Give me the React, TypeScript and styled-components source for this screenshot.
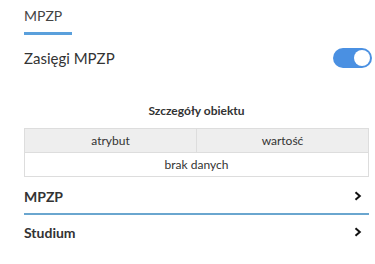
import React from "react";
import styled, { createGlobalStyle } from "styled-components";

const GlobalStyle = createGlobalStyle`
    body {
        margin: 0;
        background: #fff;
        font-family: Lato, "Open Sans", sans-serif;
        color: #333;
    }
`;

const Panel = styled.div`
    width: 375px;
    height: 264px;
    padding: 0 3px 0 24px;
    box-sizing: border-box;
    display: flex;
    flex-direction: column;
`;

const Tabs = styled.div`
    display: flex;
    padding-top: 7px;
`;

const Tab = styled.div<{ $active?: boolean }>`
    font-size: 14px;
    line-height: 18px;
    padding: 0 0 7px;
    width: 48px;
    color: #444;
    border-bottom: 3px solid ${(p) => (p.$active ? "#5aa0dc" : "transparent")};
`;

const LayerRow = styled.div`
    display: flex;
    align-items: center;
    justify-content: space-between;
    margin-top: 13px;
    height: 20px;
`;

const LayerLabel = styled.span`
    font-size: 15px;
    color: #333;
`;

const Switch = styled.div<{ $on?: boolean }>`
    width: 39px;
    height: 20px;
    border-radius: 10px;
    background: ${(p) => (p.$on ? "#4a90e2" : "#ccc")};
    display: flex;
    align-items: center;
    justify-content: ${(p) => (p.$on ? "flex-end" : "flex-start")};
    padding: 0 2px;
    box-sizing: border-box;
`;

const Knob = styled.div`
    width: 16px;
    height: 16px;
    border-radius: 50%;
    background: #fff;
`;

const Details = styled.div`
    margin-top: 35px;
    display: flex;
    flex-direction: column;
    width: 345px;
`;

const DetailsTitle = styled.div`
    text-align: center;
    font-size: 12px;
    font-weight: 700;
    color: #333;
    line-height: 16px;
    margin-bottom: 9px;
`;

const Table = styled.table`
    border-collapse: collapse;
    width: 100%;
    font-size: 12px;
    color: #333;
`;

const HeadCell = styled.th`
    background: #eeeeee;
    border: 1px solid #dddddd;
    font-weight: 400;
    height: 23px;
    padding: 0;
    width: 50%;
`;

const Cell = styled.td`
    border: 1px solid #dddddd;
    text-align: center;
    height: 23px;
    padding: 0;
`;

const Sections = styled.div`
    margin-top: 2px;
    display: flex;
    flex-direction: column;
`;

const Section = styled.div<{ $open?: boolean }>`
    display: flex;
    align-items: center;
    justify-content: space-between;
    width: 345px;
    height: 36px;
    box-sizing: border-box;
    padding-right: 7px;
    border-bottom: 2px solid ${(p) => (p.$open ? "#6aa6cf" : "transparent")};
    font-size: 14px;
    font-weight: 700;
    color: #333;
`;

const Chevron = () => (
    <svg width="8" height="10" viewBox="0 0 8 10">
        <path d="M1.5 1.2 L5.8 5 L1.5 8.8" fill="none" stroke="#111" strokeWidth="2" />
    </svg>
);

export default function App() {
    return (
        <>
            <GlobalStyle />
            <Panel>
                <Tabs>
                    <Tab $active>MPZP</Tab>
                </Tabs>
                <LayerRow>
                    <LayerLabel>Zasięgi MPZP</LayerLabel>
                    <Switch $on>
                        <Knob />
                    </Switch>
                </LayerRow>
                <Details>
                    <DetailsTitle>Szczegóły obiektu</DetailsTitle>
                    <Table>
                        <thead>
                            <tr>
                                <HeadCell>atrybut</HeadCell>
                                <HeadCell>wartość</HeadCell>
                            </tr>
                        </thead>
                        <tbody>
                            <tr>
                                <Cell colSpan={2}>brak danych</Cell>
                            </tr>
                        </tbody>
                    </Table>
                </Details>
                <Sections>
                    <Section $open>
                        MPZP
                        <Chevron />
                    </Section>
                    <Section>
                        Studium
                        <Chevron />
                    </Section>
                </Sections>
            </Panel>
        </>
    );
}
